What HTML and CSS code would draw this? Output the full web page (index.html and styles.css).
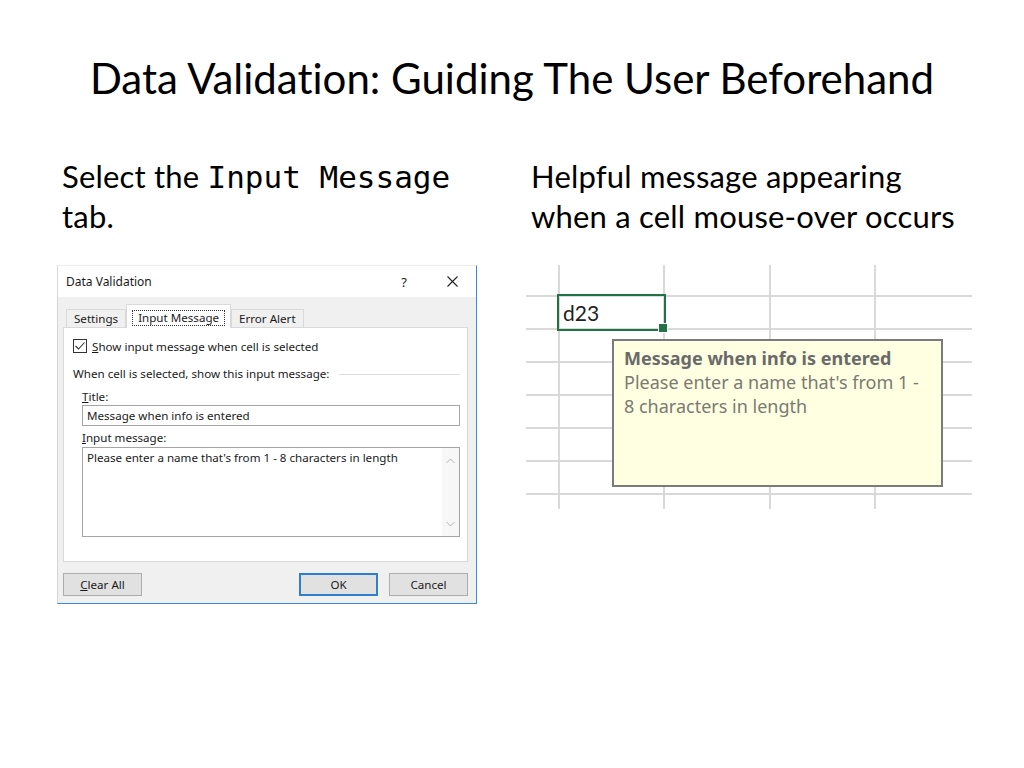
FILE: index.html
```html
<!DOCTYPE html>
<html lang="en">
<head>
  <meta charset="UTF-8">
  <meta name="viewport" content="width=device-width, initial-scale=1">
  <title>Data Validation: Guiding The User Beforehand</title>
  <link rel="stylesheet" href="styles.css">
</head>
<body>
  <div class="slide">
    <h1 class="slide-title">Data Validation: Guiding The User Beforehand</h1>

    <div class="columns">
      <!-- left: the dialog -->
      <div class="col">
        <p class="lead">Select the <code>Input Message</code><br>tab.</p>

        <div class="dialog">
          <div class="dialog-titlebar">
            <span class="dialog-title">Data Validation</span>
            <span class="dialog-help">?</span>
            <svg class="dialog-close" width="11" height="11" viewBox="0 0 11 11">
              <path d="M0.5 0.5 L10.5 10.5 M10.5 0.5 L0.5 10.5" stroke="#222" stroke-width="1.1" fill="none"/>
            </svg>
          </div>

          <div class="dialog-body">
            <div class="tabs">
              <span class="tab">Settings</span>
              <span class="tab tab-active"><span class="focus">Input Message</span></span>
              <span class="tab">Error Alert</span>
            </div>

            <div class="tab-panel">
              <div class="check-row">
                <span class="checkbox">
                  <svg width="12" height="12" viewBox="0 0 12 12">
                    <path d="M1.5 6 L4.5 9 L10.5 2.5" stroke="#333" stroke-width="1.1" fill="none"/>
                  </svg>
                </span>
                <span><u>S</u>how input message when cell is selected</span>
              </div>

              <div class="group-title">
                <span>When cell is selected, show this input message:</span>
                <span class="group-rule"></span>
              </div>

              <div class="group">
                <div class="field-label"><u>T</u>itle:</div>
                <div class="textbox">Message when info is entered</div>

                <div class="field-label field-label-gap"><u>I</u>nput message:</div>
                <div class="textarea">
                  <span class="textarea-text">Please enter a name that's from 1 - 8 characters in length</span>
                  <div class="scrollbar">
                    <svg width="9" height="6" viewBox="0 0 9 6"><path d="M0.5 5 L4.5 1 L8.5 5" stroke="#b4b4b4" fill="none"/></svg>
                    <svg width="9" height="6" viewBox="0 0 9 6"><path d="M0.5 1 L4.5 5 L8.5 1" stroke="#b4b4b4" fill="none"/></svg>
                  </div>
                </div>
              </div>
            </div>

            <div class="buttons">
              <button class="btn"><u>C</u>lear All</button>
              <button class="btn btn-default">OK</button>
              <button class="btn">Cancel</button>
            </div>
          </div>
        </div>
      </div>

      <!-- right: the sheet with the hover message -->
      <div class="col">
        <p class="lead">Helpful message appearing<br>when a cell mouse-over occurs</p>

        <div class="sheet">
          <div class="sheet-grid">
            <div class="cell"></div><div class="cell"></div><div class="cell"></div><div class="cell"></div><div class="cell"></div>
            <div class="cell"></div><div class="cell cell-selected">d23</div><div class="cell"></div><div class="cell"></div><div class="cell"></div>
            <div class="cell"></div><div class="cell"></div><div class="cell"></div><div class="cell"></div><div class="cell"></div>
            <div class="cell"></div><div class="cell"></div><div class="cell"></div><div class="cell"></div><div class="cell"></div>
            <div class="cell"></div><div class="cell"></div><div class="cell"></div><div class="cell"></div><div class="cell"></div>
            <div class="cell"></div><div class="cell"></div><div class="cell"></div><div class="cell"></div><div class="cell"></div>
            <div class="cell"></div><div class="cell"></div><div class="cell"></div><div class="cell"></div><div class="cell"></div>
            <div class="cell"></div><div class="cell"></div><div class="cell"></div><div class="cell"></div><div class="cell"></div>
          </div>

          <div class="input-tip">
            <div class="input-tip-title">Message when info is entered</div>
            <div class="input-tip-text">Please enter a name that's from 1 -<br>8 characters in length</div>
          </div>
        </div>
      </div>
    </div>
  </div>
</body>
</html>
```

FILE: styles.css
```css
* {
  box-sizing: border-box;
}

body {
  margin: 0;
  background: #ffffff;
  font-family: Lato, "Noto Sans", sans-serif;
  font-variant-ligatures: none;
  color: #000;
}

.slide {
  width: 1024px;
  height: 768px;
  padding-top: 53px;
}

.slide-title {
  margin: 0;
  text-align: center;
  font-size: 42px;
  font-weight: 400;
  line-height: 50px;
}

.columns {
  display: grid;
  grid-template-columns: 469px 446px;
  padding-left: 57px;
  margin-top: 53px;
}

.lead {
  margin: 0 0 29px 5px;
  font-size: 31px;
  letter-spacing: 0.2px;
  line-height: 40px;
}

.lead code {
  font-family: "DejaVu Sans Mono", monospace;
  font-size: 31px;
  letter-spacing: 0;
  line-height: 1;
}

/* dialog */

.dialog {
  display: flex;
  flex-direction: column;
  width: 420px;
  height: 339px;
  background: #f0f0f0;
  border: 1px solid #3b8ad8;
  border-top-color: #ececec;
  border-left-color: #d5d5d5;
  font-family: "Noto Sans", sans-serif;
  font-size: 11.6px;
  color: #1a1a1a;
}

.dialog u {
  text-underline-offset: 1px;
}

.dialog-titlebar {
  display: flex;
  align-items: center;
  height: 31px;
  padding: 0 18px 0 8px;
  background: #ffffff;
  font-size: 12px;
}

.dialog-help {
  margin-left: auto;
  margin-right: 40px;
  font-size: 13px;
}

.dialog-body {
  flex: 1;
  display: flex;
  flex-direction: column;
  padding: 0 8px 7px 5px;
}

.tabs {
  display: flex;
  align-items: flex-end;
  height: 30px;
  padding-left: 3px;
}

.tab {
  height: 18px;
  padding: 0 7px;
  line-height: 17px;
  border: 1px solid #d9d9d9;
  border-bottom: none;
}

.tab-active {
  position: relative;
  z-index: 1;
  height: 24px;
  margin-bottom: -1px;
  padding: 5px 5px 0;
  background: #ffffff;
}

.focus {
  display: block;
  padding: 0 5px;
  line-height: 14px;
  border: 1px dotted #333;
}

.tab-panel {
  height: 235px;
  padding: 11px 7px 0 9px;
  background: #ffffff;
  border: 1px solid #d9d9d9;
}

.check-row {
  display: flex;
  align-items: center;
  gap: 5px;
  height: 14px;
}

.checkbox {
  display: flex;
  align-items: center;
  justify-content: center;
  width: 14px;
  height: 14px;
  border: 1px solid #333;
}

.group-title {
  display: flex;
  align-items: center;
  margin-top: 13px;
  line-height: 16px;
}

.group-rule {
  flex: 1;
  height: 1px;
  margin-left: 10px;
  background: #dcdcdc;
}

.group {
  margin-left: 9px;
}

.field-label {
  margin-top: 7px;
  line-height: 16px;
}

.field-label-gap {
  margin-top: 4px;
}

.textbox {
  height: 21px;
  padding-left: 4px;
  line-height: 19px;
  border: 1px solid #a5a5a5;
}

.textarea {
  display: flex;
  height: 90px;
  margin-top: 1px;
  border: 1px solid #a5a5a5;
}

.textarea-text {
  flex: 1;
  padding: 2px 4px;
  line-height: 16px;
}

.scrollbar {
  display: flex;
  flex-direction: column;
  align-items: center;
  justify-content: space-between;
  width: 17px;
  padding: 10px 0 9px;
  background: #f7f7f7;
}

.buttons {
  display: flex;
  gap: 11px;
  margin-top: 11px;
}

.btn {
  width: 79px;
  height: 23px;
  padding: 0;
  background: #e1e1e1;
  border: 1px solid #adadad;
  font-family: inherit;
  font-size: 11.6px;
  color: #1a1a1a;
}

.btn-default {
  margin-left: auto;
  border: 2px solid #2f7fce;
}

/* sheet */

.sheet {
  position: relative;
  width: 446px;
}

.sheet-grid {
  display: grid;
  grid-template-columns: 32px 103px 104px 103px 96px;
  grid-template-rows: 30px repeat(6, 31px) 14px;
  gap: 2px;
  background: #d9d9d9;
}

.cell {
  background: #ffffff;
}

.cell-selected {
  position: relative;
  padding-left: 3px;
  font-size: 21px;
  line-height: 31px;
  color: #222;
  outline: 2px solid #217346;
  outline-offset: 1px;
}

.cell-selected::after {
  content: "";
  position: absolute;
  right: -5px;
  bottom: -5px;
  width: 8px;
  height: 8px;
  background: #217346;
  border: 1px solid #ffffff;
}

.input-tip {
  position: absolute;
  left: 86px;
  top: 74px;
  width: 331px;
  height: 148px;
  padding: 5px 10px;
  background: #ffffe1;
  border: 2px solid #7b7b7b;
  font-family: "Noto Sans", sans-serif;
  font-size: 18px;
  line-height: 24px;
  color: #7a7a72;
}

.input-tip-title {
  font-weight: 700;
  color: #6a6a6a;
}
```
